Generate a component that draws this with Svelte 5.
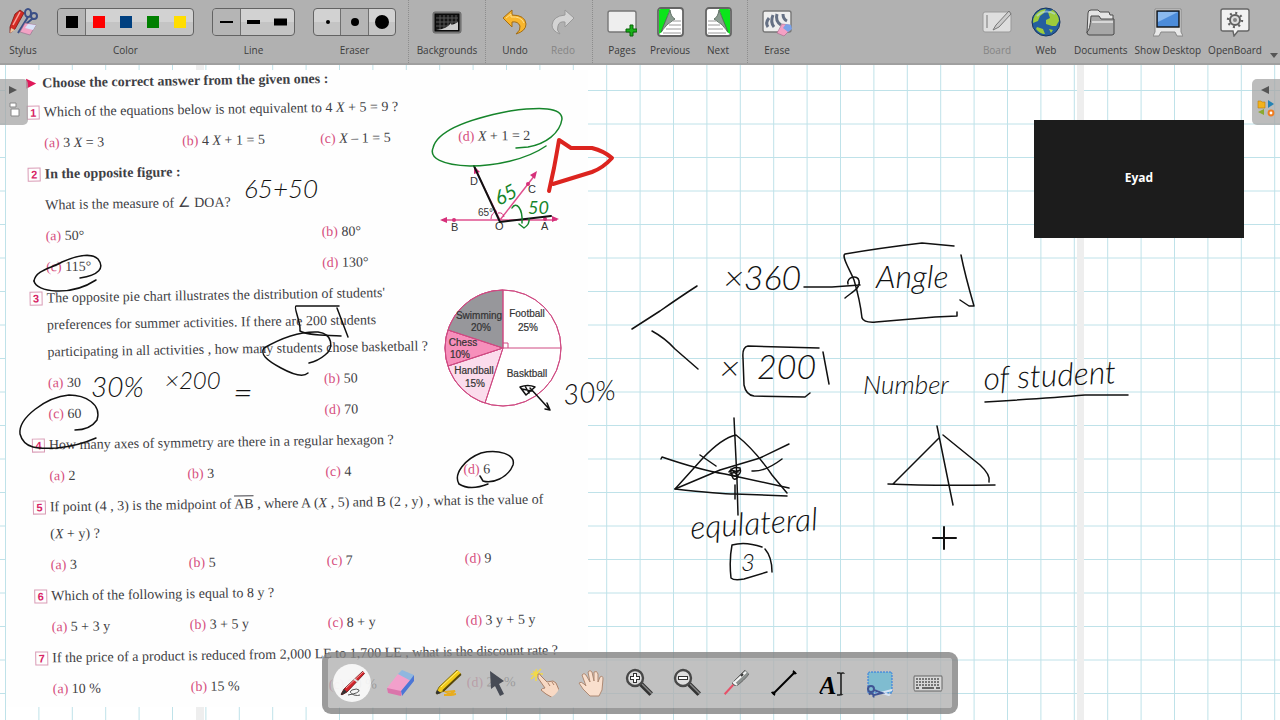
<script lang="ts">
	type Option = { key: string; text: string };
	type Question = { id: number; lines: string[]; options: Option[]; wide?: boolean };

	let color = 'black';
	let line = 0;
	let eraser = 1;
	let activeTool = 'Pen';

	const colors = [
		{ name: 'black', hex: '#000000' },
		{ name: 'red', hex: '#ff0000' },
		{ name: 'blue', hex: '#004080' },
		{ name: 'green', hex: '#008000' },
		{ name: 'yellow', hex: '#ffdd00' }
	];
	const lines = [2, 4, 7];
	const erasers = [2, 4, 7];

	const opts = (...texts: string[]): Option[] =>
		texts.map((text, i) => ({ key: 'abcd'[i], text }));

	const questions: Question[] = [
		{
			id: 1,
			lines: ['Which of the equations below is not equivalent to 4 <i>X</i> + 5 = 9 ?'],
			options: opts('3 <i>X</i> = 3', '4 <i>X</i> + 1 = 5', '<i>X</i> – 1 = 5', '<i>X</i> + 1 = 2')
		},
		{
			id: 2,
			lines: ['<b>In the opposite figure :</b>', 'What is the measure of ∠ DOA?'],
			options: opts('50°', '80°', '115°', '130°'),
			wide: true
		},
		{
			id: 3,
			lines: [
				"The opposite pie chart illustrates the distribution of students'",
				'preferences for summer activities. If there are 200 students',
				'participating in all activities , how many students chose basketball ?'
			],
			options: opts('30', '50', '60', '70'),
			wide: true
		},
		{
			id: 4,
			lines: ['How many axes of symmetry are there in a regular hexagon ?'],
			options: opts('2', '3', '4', '6')
		},
		{
			id: 5,
			lines: [
				'If point (4 , 3) is the midpoint of <u>AB</u> , where A (<i>X</i> , 5) and B (2 , y) , what is the value of',
				'(<i>X</i> + y) ?'
			],
			options: opts('3', '5', '7', '9')
		},
		{
			id: 6,
			lines: ['Which of the following is equal to 8 y ?'],
			options: opts('5 + 3 y', '3 + 5 y', '8 + y', '3 y + 5 y')
		},
		{
			id: 7,
			lines: ['If the price of a product is reduced from 2,000 LE to 1,700 LE , what is the discount rate ?'],
			options: opts('10 %', '15 %', '20 %', '22 %')
		}
	];

	const palette = [
		'Pen', 'Eraser', 'Marker', 'Select', 'Interact', 'Scroll', 'Zoom in',
		'Zoom out', 'Laser', 'Line', 'Text', 'Capture', 'Keyboard'
	];

	// free-hand shapes drawn on the board with the black pen
	const strokes = [
		'M34 281C36 270 52 268 62 262C78 255 92 253 98 259C105 268 99 275 80 278',
		'M34 281C36 292 70 297 96 280',
		'M339 306L296 306C293 307 301 322 300 331C310 336 325 335 341 336M337 308L348 337',
		'M308 373C303 378 292 374 281 368C266 360 260 354 264 348C276 341 296 331 318 332C333 334 334 348 325 355Q318 361 309 363',
		'M75 430Q90 430 97 420C102 404 85 395 69 395C46 397 18 418 20 434C24 449 38 449 57 448Q78 446 96 438',
		'M488 484Q470 491 459 484C453 474 465 459 481 453C498 449 516 454 513 465C508 478 492 484 483 481L480 476',
		'M520 387Q528 384 535 387L526 395ZM522 389L532 391M525 386L529 393M530 388L541 400L550 410M545 409L550 410L547 403',
		'M632 329L660 311Q680 297 697 286M652 331Q665 338 675 349L698 369',
		'M804 287L832 287L860 285M848 284C846 277 858 274 859 281C861 288 852 292 845 298',
		'M954 246L922 243Q880 248 845 254C841 256 850 270 854 280Q860 300 862 318Q864 323 876 322L935 317L957 316V312M961 255Q965 275 974 306L969 306L960 300',
		'M819 348L748 346Q742 347 743 358L744 385Q746 395 754 396L805 397L810 393M823 352L829 384',
		'M985 402Q1050 398 1085 395L1128 395',
		'M675 489L703 458Q722 438 736 435Q755 450 772 475L787 493M675 489Q720 494 735 494L787 496',
		'M734 418L737 480L738 515M661 459L662 457Q700 470 725 474L789 488M675 489L720 470L760 458L789 444',
		'M752 471Q765 472 782 459M700 455L716 466M735 485L735 499',
		'M729 472Q733 466 740 468Q742 474 736 476Q730 476 731 470L738 472M732 476Q734 482 738 477M730 474L740 470M731 469L738 476',
		'M762 547Q745 541 732 545Q729 560 731 578Q734 581 744 579L767 572M765 549Q772 557 772 572',
		'M893 484L939 438M943 435L980 465Q991 475 989 482M888 484Q930 486 995 485M937 426L953 505'
	];

	const cols = Array.from({ length: 40 }, (_, i) => 5.5 + i * 33.4);
	const rows = Array.from({ length: 20 }, (_, i) => 90.5 + i * 33.5);
</script>

<div class="app">
	<header class="toolbar">
		<button class="tool stylus">
			<svg class="icon" viewBox="0 0 30 30">
				<path d="M20 2a3 4 0 1 0 0 8a3 4 0 1 0 0-8M26 6a3 3 0 1 0 0 6a3 3 0 1 0 0-6M20 10L10 26M24 12L12 22" fill="none" stroke="#3b4f86" stroke-width="2" />
				<path d="M7 7l5-4 4 3-9 16-5 4 0-6z" fill="#d52b24" stroke="#7d1612" stroke-width=".8" />
				<path d="M5 18L12 5" stroke="#f9a29b" stroke-width="1.5" />
				<path d="M2 26l1-5 4 2z" fill="#e7c9a6" />
				<path d="M17 16l11 2-6 10-10-3z" fill="#f2a2c4" stroke="#916d8b" stroke-width=".6" />
				<path d="M20 17l8 1-3 5-8-2z" fill="#d9e3fa" />
			</svg>
			<span>Stylus</span>
		</button>

		<div class="group" role="group" aria-label="Color">
			<div class="segments">
				{#each colors as c}
					<button class:active={color === c.name} aria-label={c.name} on:click={() => (color = c.name)}>
						<svg width="12" height="12"><rect width="12" height="12" fill={c.hex} /></svg>
					</button>
				{/each}
			</div>
			<span>Color</span>
		</div>
		<div class="group" role="group" aria-label="Line">
			<div class="segments">
				{#each lines as h, i}
					<button class:active={line === i} aria-label="Line {i + 1}" on:click={() => (line = i)}>
						<svg width="13" height="8"><rect y={(8 - h) / 2} width="13" height={h} /></svg>
					</button>
				{/each}
			</div>
			<span>Line</span>
		</div>
		<div class="group" role="group" aria-label="Eraser">
			<div class="segments">
				{#each erasers as r, i}
					<button class:active={eraser === i} aria-label="Eraser {i + 1}" on:click={() => (eraser = i)}>
						<svg width="14" height="14"><circle cx="7" cy="7" {r} /></svg>
					</button>
				{/each}
			</div>
			<span>Eraser</span>
		</div>

		<div class="separator first"></div>
		<button class="tool backgrounds">
			<svg class="icon" viewBox="0 0 30 30">
				<rect x="1" y="5" width="28" height="21" rx="2" fill="#828282" stroke="#666" />
				<rect x="3" y="7" width="24" height="17" fill="#151515" stroke="#000" />
				<path d="M4 11H26M4 15H26M4 19H26M8 8V23M12 8V23M16 8V23M20 8V23M24 8V23" stroke="#565656" />
				<path d="M4 23Q15 22 19 16Q18 20 26 15V23Z" fill="#ccc" />
			</svg>
			<span>Backgrounds</span>
		</button>
		<div class="separator"></div>
		<button class="tool">
			<svg class="icon" viewBox="0 0 30 30">
				<path d="M3 11L12 3V8Q25 8 26 17Q26 24 16 27Q21 23 20 19Q18 14 12 15V20Z" fill="#f9b62d" stroke="#a36c12" />
				<path d="M6 11L11 7V10Q21 9 24 16" fill="none" stroke="#ffe08a" />
			</svg>
			<span>Undo</span>
		</button>
		<button class="tool" disabled>
			<svg class="icon" viewBox="0 0 30 30">
				<path d="M26 11L17 3V8Q5 9 4 18Q4 24 12 27Q8 23 10 19Q11 14 17 15V20Z" fill="#d4d4d4" stroke="#999" />
			</svg>
			<span>Redo</span>
		</button>
		<div class="separator"></div>
		<button class="tool">
			<svg class="icon" viewBox="0 0 30 30">
				<rect x="1" y="4" width="28" height="21" rx="2" fill="#eee" stroke="#777" stroke-width="1.4" />
				<path d="M23 18h3v4h4v3h-4v4h-3v-4h-4v-3h4z" fill="#18b218" stroke="#086508" />
			</svg>
			<span>Pages</span>
		</button>
		<button class="tool">
			<svg class="icon" viewBox="0 0 30 30">
				<rect x="3" y="1" width="25" height="28" rx="3" fill="#fff" stroke="#646464" stroke-width="1.8" />
				<path d="M4 3Q4 2 6 2H15L7 25L4 27Z" fill="#0be51b" />
				<path d="M15 3L6 25Q11 17 20 12Q16 10 15 3Z" fill="#8b9c91" stroke="#4b5e51" stroke-width=".8" />
				<path d="M18 14H26M14 18H26M11 22H26M8 26H26" stroke="#9a9a9a" />
			</svg>
			<span>Previous</span>
		</button>
		<button class="tool">
			<svg class="icon" viewBox="0 0 30 30">
				<rect x="3" y="1" width="25" height="28" rx="3" fill="#fff" stroke="#646464" stroke-width="1.8" />
				<path d="M27 3Q27 2 25 2H16L24 25L27 27Z" fill="#0be51b" />
				<path d="M16 3L25 25Q20 17 11 12Q15 10 16 3Z" fill="#8b9c91" stroke="#4b5e51" stroke-width=".8" />
				<path d="M5 14H13M5 18H17M5 22H20M5 26H23" stroke="#9a9a9a" />
			</svg>
			<span>Next</span>
		</button>
		<div class="separator"></div>
		<button class="tool">
			<svg class="icon" viewBox="0 0 30 30">
				<rect x="1" y="4" width="28" height="21" rx="2" fill="#eee" stroke="#777" stroke-width="1.4" />
				<path d="M6 20Q3 16 7 11M12 20Q8 15 11 8M19 18Q13 14 15 7M25 14Q21 12 21 7" fill="none" stroke="#657084" stroke-width="3" />
				<path d="M20 17l8 1 1 4-7 7-7-3z" fill="#f4a0c4" stroke="#a2668a" stroke-width=".6" />
				<path d="M24 17l5 1 1 4-4 3-5-4z" fill="#7ba2e8" />
			</svg>
			<span>Erase</span>
		</button>

		<div class="right-tools">
			<button class="tool" disabled>
				<svg class="icon" viewBox="0 0 30 30">
					<rect x="1" y="5" width="28" height="20" rx="2" fill="#dedede" stroke="#999" />
					<path d="M5 8V21" stroke="#aaa" stroke-width="2" />
					<path d="M27 4L14 18L11 23L17 20L29 7Z" fill="#ccc" stroke="#777" />
				</svg>
				<span>Board</span>
			</button>
			<button class="tool">
				<svg class="icon" viewBox="0 0 30 30">
					<circle cx="15" cy="15" r="14" fill="#245f9f" stroke="#17355e" />
					<path d="M4 8Q9 2 15 2L13 6L9 9L7 14L2 16Q2 11 4 8M17 5L22 3Q28 8 28 14L25 19L21 19L15 17L15 13L19 11ZM6 20L12 22L14 27Q9 27 5 22M18 22L22 23L20 26Z" fill="#9dcb3b" />
					<path d="M6 9Q14 1 24 7" stroke="#b9d9f2" fill="none" opacity=".6" stroke-width="2" />
				</svg>
				<span>Web</span>
			</button>
			<button class="tool">
				<svg class="icon" viewBox="0 0 30 30">
					<path d="M2 6Q2 3 5 3H12L14 5H23L24 8H27V24H4L1 26Z" fill="#e4e4e4" stroke="#4c4c4c" />
					<path d="M5 9H13L15 12H28V27Q27 28 26 28H3Q1 28 1 25Q4 24 5 9Z" fill="#a7a7a7" stroke="#494949" />
					<path d="M6 15H27" stroke="#d7d7d7" stroke-width="2" />
				</svg>
				<span>Documents</span>
			</button>
			<button class="tool">
				<svg class="icon" viewBox="0 0 30 30">
					<path d="M2 2H28V25L30 29H24L22 25H8L6 29H0L2 25Z" fill="#e8e8e8" stroke="#888" />
					<rect x="4" y="4" width="22" height="16" fill="#4c8cda" stroke="#111" stroke-width="1.4" />
					<path d="M5 5H25L5 15Z" fill="#8ab9ee" />
				</svg>
				<span>Show Desktop</span>
			</button>
			<button class="tool">
				<svg class="icon" viewBox="0 0 30 30">
					<path d="M3 2H27Q29 2 29 4V22Q29 24 27 24H18L14 29L13 24H3Q1 24 1 22V4Q1 2 3 2Z" fill="#f1f1f1" stroke="#656565" stroke-width="1.4" />
					<circle cx="15" cy="13" r="5" fill="#ddd" stroke="#606060" stroke-width="2" />
					<circle cx="15" cy="13" r="7" fill="none" stroke="#606060" stroke-width="2.4" stroke-dasharray="2 3.5" />
					<circle cx="15" cy="13" r="2" fill="#858585" />
				</svg>
				<span>OpenBoard</span>
			</button>
			<button class="more" aria-label="More"><svg width="10" height="6"><path d="M1 0H9L5 5Z" fill="#555" /></svg></button>
		</div>
	</header>

	<main class="board">
		<svg class="layer" aria-hidden="true">
			<g transform="translate(0 -65)">
				{#each cols as x}
					<line x1={x} x2={x} y1="60" y2="1200" class="grid-line" />
				{/each}
				{#each rows as y}
					<line x1="0" x2="1400" y1={y} y2={y} class="grid-line" />
				{/each}
				<rect x="1077" y="60" width="7" height="1200" fill="#eeeeee" />
				<rect x="196" y="60" width="8" height="1200" fill="#eeeeee" />
			</g>
		</svg>

		<article class="worksheet">
			<div class="questions">
				<h1><span class="pointer"></span>Choose the correct answer from the given ones :</h1>
				{#each questions as q}
					<section>
						<div class="question" class:spread={q.id === 2}>
							<span class="number">{q.id}</span>
							<p>
								{#each q.lines as l}
									<span class="text-line">{@html l}</span>
								{/each}
							</p>
						</div>
						<ul class:wide={q.wide}>
							{#each q.options as o}
								<li><span>({o.key})</span> {@html o.text}</li>
							{/each}
						</ul>
					</section>
				{/each}
			</div>
		</article>

		<svg class="layer">
			<g transform="translate(0 -65)">
				<g class="angle-figure">
					<path d="M442 220H557M500 220L475 169M500 220L535 175" fill="none" stroke="#e0508e" stroke-width="1.5" />
					<path d="M440 220l7-3v6zM559 219l-7-3v6zM537 171l-2 8-5-4zM474 166l6 6-6 2z" fill="#d6307a" />
					<path d="M491 219q0-6 6-8M498 213q5-1 6 4" fill="none" stroke="#d6307a" />
					<circle cx="454" cy="220" r="2" /><circle cx="545" cy="219" r="2" /><circle cx="528" cy="184" r="2" />
					<text x="451" y="231">B</text>
					<text x="495" y="230">O</text>
					<text x="541" y="230">A</text>
					<text x="470" y="185">D</text>
					<text x="528" y="193">C</text>
					<text x="478" y="216" class="small">65°</text>
				</g>

				<g class="pie">
					<circle cx="503" cy="348" r="58" fill="#fff" />
					<path d="M503 348L485 403A58 58 0 0 1 448 366Z" fill="#fbdcec" />
					<path d="M503 348L448 366A58 58 0 0 1 448 330Z" fill="#f78fbb" />
					<path d="M503 348L448 330A58 58 0 0 1 503 290Z" fill="#97979b" />
					<path d="M503 290V348H561M503 348L485 403M503 348L448 366M503 348L448 330M503 343h5v5" />
					<circle cx="503" cy="348" r="58" />
					<text x="479" y="319">Swimming</text><text x="481" y="331">20%</text>
					<text x="527" y="317">Football</text><text x="528" y="331">25%</text>
					<text x="463" y="346">Chess</text><text x="460" y="358">10%</text>
					<text x="474" y="374">Handball</text><text x="475" y="387">15%</text>
					<text x="527" y="377">Basktball</text>
				</g>

				<g class="ink">
					{#each strokes as d}
						<path {d} />
					{/each}
					<path d="M474 166L487 194L500 222L551 216" stroke-width="2" />
					<path d="M933 538H956M944 527V549" stroke-width="2" />
				</g>
				<g class="ink green">
					<path d="M546 146C526 160 494 166 470 166C442 165 429 158 433 148C438 127 484 116 510 111C540 107 562 107 562 119C560 133 546 144 528 147L516 148" />
					<path d="M512 208C516 201 523 208 522 223M519 224L524 228Q530 224 529 219" />
				</g>
				<path class="marker" d="M559 140L571 148L592 148Q604 151 612 158Q603 168 592 172L553 184M559 140Q557 152 554 168L549 191" />

				<g class="writing">
					<text x="244" y="198" font-size="26">65+50</text>
					<text x="91" y="397" font-size="28">30%</text>
					<text x="165" y="389" font-size="24">×200</text>
					<text x="233" y="404" font-size="34">=</text>
					<text x="564" y="405" font-size="28" transform="rotate(-6 564 405)">30%</text>
					<text x="724" y="290" font-size="34">×360</text>
					<text x="876" y="288" font-size="32">Angle</text>
					<text x="720" y="380" font-size="34">×</text>
					<text x="757" y="379" font-size="34">200</text>
					<text x="863" y="394" font-size="26">Number</text>
					<text x="984" y="390" font-size="32" transform="rotate(-3 984 390)">of student</text>
					<text x="691" y="539" font-size="32" transform="rotate(-4 691 539)">equlateral</text>
					<text x="741" y="571" font-size="24">3</text>
					<g class="green-text">
						<text x="499" y="206" font-size="20" transform="rotate(-28 499 206)">65</text>
						<text x="528" y="214" font-size="18">50</text>
					</g>
				</g>
			</g>
		</svg>

		<button class="side-tab left" aria-label="Show pages">
			<svg width="12" height="34" viewBox="0 0 12 34">
				<path d="M1 1L9 5L1 9Z" fill="#555" />
				<path d="M2 18h6v4h-6zM3 24h8v7h-8z" fill="#fff" stroke="#888" />
			</svg>
		</button>
		<button class="side-tab right" aria-label="Show library">
			<svg width="18" height="36" viewBox="0 0 18 36">
				<path d="M12 2L4 6L12 10Z" fill="#555" />
				<path d="M1 17h3l1 1h3v6H1z" fill="#f2b21c" stroke="#b97c0a" stroke-width=".6" />
				<path d="M11 16l6 4-6 4z" fill="#2583b4" />
				<path d="M7 25v6l-6-3z" fill="#8ba82f" />
				<circle cx="14" cy="29" r="2.4" fill="#fff" stroke="#ef7d22" stroke-width="2" />
			</svg>
		</button>

		<aside class="participant">Eyad</aside>

		<nav class="palette" aria-label="Tools">
			{#each palette as name}
				<button class:active={activeTool === name} aria-label={name} on:click={() => (activeTool = name)}>
					<svg viewBox="0 0 32 32">
						{#if name === 'Pen'}
							<path d="M12 28q12-2 11-5q-2-2-7 0q-4 2 2 5q4 1 6 0" fill="none" stroke="#555" />
							<path d="M4 29L8 22L27 4L30 3L29 6L11 25Z" fill="#d3242b" stroke="#611" stroke-width=".8" />
							<path d="M10 21L27 5" stroke="#f79c9c" />
							<path d="M4 29L8 22L11 25Z" fill="#333" />
							<path d="M18 12l4 3" stroke="#ddd" stroke-width="2" />
						{:else if name === 'Eraser'}
							<path d="M3 21L14 7L27 12L17 29L4 25Z" fill="#f2a0cb" />
							<path d="M14 7L18 3L30 8L27 14Z" fill="#90b7df" />
							<path d="M27 12L30 8V14L18 29L17 24Z" fill="#4c76d6" />
							<path d="M3 21L17 24V29L4 26Z" fill="#da75ab" />
						{:else if name === 'Marker'}
							<path d="M12 28H19L14 25L23 24L17 28L24 27" fill="none" stroke="#e8ac1e" stroke-width="2" />
							<path d="M3 28L7 20L25 3L30 4L29 7L12 24Z" fill="#f1ca17" stroke="#6c5b08" stroke-width=".8" />
							<path d="M9 20L26 4" stroke="#fff07a" />
							<path d="M11 24L29 7" stroke="#57480b" stroke-width="2" />
							<path d="M3 28L5 23L9 26Z" fill="#333" />
						{:else if name === 'Select'}
							<path d="M10 4L24 14L19 17L24 27L20 29L15 19L11 22Z" fill="#474b55" />
						{:else if name === 'Interact'}
							<path d="M8 0V14M1 7H15M3 2L13 12M13 2L3 12" stroke="#f3da45" stroke-width="1.5" />
							<path d="M10 7Q12 6 13 9L19 15L25 14L28 16L31 23V27L25 31L18 27L13 23Q14 21 17 21L10 11Z" fill="#f8d9c4" stroke="#aa8069" />
							<path d="M20 16L22 19M24 15L26 18" stroke="#aa8069" />
						{:else if name === 'Scroll'}
							<path d="M3 16Q5 14 8 17L10 19L6 8Q8 5 10 8L14 15L12 5Q14 2 16 5L18 14L18 5Q21 3 22 7L22 15L24 10Q27 8 27 12L26 23L23 29H14L7 22Z" fill="#f9dfcd" stroke="#ae8a74" />
						{:else if name === 'Zoom in' || name === 'Zoom out'}
							<path d="M17 17L29 29" stroke="#333" stroke-width="5" />
							<path d="M18 17L28 27" stroke="#888" stroke-width="1.4" />
							<circle cx="11" cy="11" r="8" fill="#dedede" stroke="#484848" stroke-width="2.4" />
							<path d={name === 'Zoom in' ? 'M6 11H16M11 6V16' : 'M6 11H16'} stroke="#333" stroke-width="4" />
							<path d={name === 'Zoom in' ? 'M7 11H15M11 7V15' : 'M7 11H15'} stroke="#fff" stroke-width="2" />
						{:else if name === 'Laser'}
							<path d="M3 29L14 17" stroke="#e65269" stroke-width="2" />
							<path d="M12 16L25 3Q28 1 30 4Q30 8 18 18Q14 20 12 16Z" fill="#8b918f" stroke="#666" />
							<path d="M14 16L26 5M13 15L17 18" stroke="#f5f5f5" stroke-width="2" />
							<path d="M21 9L23 7" stroke="#333" stroke-width="2" />
						{:else if name === 'Line'}
							<path d="M5 27L27 5" stroke="#000" stroke-width="2" />
							<circle cx="5" cy="27" r="2.4" /><circle cx="27" cy="5" r="2.4" />
						{:else if name === 'Text'}
							<text x="3" y="27" class="letter">A</text>
							<path d="M21 6H24L25 7L26 6H29M25 7V27M21 28H24L25 27L26 28H29" fill="none" stroke="#222" stroke-width="1.6" />
						{:else if name === 'Capture'}
							<rect x="4" y="5" width="24" height="21" fill="#7fbcd0" stroke="#2876e1" stroke-dasharray="2 1" />
							<path d="M9 23L28 29M9 28L28 23" stroke="#d8e4f5" stroke-width="2" />
							<circle cx="7" cy="22" r="3" fill="none" stroke="#3f5494" stroke-width="2" />
							<circle cx="7" cy="29" r="2.6" fill="none" stroke="#3f5494" stroke-width="2" />
							<path d="M10 23L18 26L10 28" fill="none" stroke="#3f5494" stroke-width="2" />
						{:else}
							<rect x="2" y="9" width="28" height="15" fill="#d8d8d8" stroke="#656565" />
							<path d="M4 12H28M4 15H28M4 18H28" stroke="#777" stroke-width="2" stroke-dasharray="2 1" />
							<path d="M4 21H7M10 21H22M24 21H28" stroke="#666" stroke-width="2" />
						{/if}
					</svg>
				</button>
			{/each}
		</nav>
	</main>
</div>

<style>
	:global(body) {
		margin: 0;
	}

	.app {
		display: flex;
		flex-direction: column;
		height: 100vh;
		overflow: hidden;
		font-family: 'Open Sans', 'Noto Sans', sans-serif;
	}

	button {
		padding: 0;
		border: none;
		background: none;
		font: inherit;
		color: inherit;
		cursor: pointer;
	}

	/* Toolbar */
	.toolbar {
		display: flex;
		box-sizing: border-box;
		height: 65px;
		padding: 7px 1px 0 7px;
		background: #b1b1b1;
		border-bottom: 2px solid #a0a0a0;
		color: #3c3c3c;
		font-size: 10px;
		line-height: 16px;
		flex-shrink: 0;
	}

	.tool,
	.group {
		display: flex;
		flex-direction: column;
		align-items: center;
		gap: 5px;
		white-space: nowrap;
	}

	.tool {
		width: 48px;
	}

	.tool:disabled {
		color: #858585;
	}

	.stylus {
		width: 32px;
	}

	.backgrounds {
		width: 66px;
	}

	.icon {
		width: 30px;
		height: 30px;
		flex-shrink: 0;
	}

	.group {
		margin-left: 18px;
	}

	.segments {
		display: flex;
		box-sizing: border-box;
		height: 28px;
		margin: 1px 0;
		border: 1px solid #636363;
		border-radius: 4px;
		background: linear-gradient(#d2d2d2 50%, #c4c4c4 50%);
		overflow: hidden;
	}

	.segments button {
		display: flex;
		align-items: center;
		justify-content: center;
		width: 27px;
	}

	.segments button.active {
		background: #b5b5b5;
		box-shadow: 0 0 0 1px #707070;
	}

	.separator {
		margin: -7px 5px 0;
		border-left: 1px dotted #8d8d8d;
	}

	.separator.first {
		margin-left: 12px;
	}

	.right-tools {
		display: flex;
		gap: 7px;
		margin-left: auto;
	}

	.right-tools .tool {
		width: auto;
		min-width: 42px;
	}

	.more {
		align-self: flex-end;
	}

	/* Board */
	.board {
		position: relative;
		flex: 1;
		background: #fff;
		overflow: hidden;
	}

	.layer {
		position: absolute;
		inset: 0;
		width: 100%;
		height: 100%;
		pointer-events: none;
	}

	.grid-line {
		stroke: #bfe2e9;
		stroke-width: 1;
	}

	.worksheet {
		position: absolute;
		top: 5px;
		left: 6px;
		width: 582px;
		height: 637px;
		background: #fefefe;
		color: #3f3f45;
		font-family: 'Liberation Serif', serif;
		font-size: 14px;
		line-height: 27px;
	}

	.questions {
		padding-left: 20px;
		transform: rotate(-0.9deg);
		transform-origin: top left;
	}

	h1 {
		display: flex;
		align-items: center;
		gap: 6px;
		margin: 0;
		font-size: 14px;
		line-height: 27px;
		white-space: nowrap;
	}

	.pointer {
		border: 5px solid transparent;
		border-left: 10px solid #e0195a;
		border-right: none;
	}

	.question {
		display: flex;
		align-items: flex-start;
		gap: 4px;
		padding: 2px 0;
		white-space: nowrap;
	}

	.question p {
		margin: 0;
	}

	.text-line {
		display: block;
	}

	.spread .text-line + .text-line {
		margin-top: 4px;
	}

	.number {
		box-sizing: border-box;
		width: 13px;
		margin-top: 7px;
		border: 1px solid #d99bb5;
		color: #d82466;
		font: bold 11px/12px 'Liberation Sans', sans-serif;
		text-align: center;
	}

	.question :global(u) {
		text-decoration: overline;
	}

	ul {
		display: grid;
		grid-template-columns: repeat(4, 138px);
		margin: 0;
		padding: 0 0 0 17px;
		list-style: none;
		line-height: 31px;
	}

	ul.wide {
		grid-template-columns: repeat(2, 276px);
	}

	li span {
		color: #d6507f;
	}

	.angle-figure text,
	.pie text {
		fill: #333;
		font-family: 'Liberation Sans', sans-serif;
		font-size: 11px;
	}

	.angle-figure circle {
		fill: #d6307a;
	}

	.angle-figure .small {
		font-size: 10px;
	}

	.pie text {
		font-size: 10px;
		text-anchor: middle;
		stroke: #333;
		stroke-width: 0.2;
	}

	.pie circle,
	.pie path {
		stroke: #cf4a82;
		stroke-width: 1;
	}

	.pie circle:last-of-type,
	.pie path:last-of-type {
		fill: none;
	}

	.ink {
		fill: none;
		stroke: #111;
		stroke-width: 1.5;
		stroke-linecap: round;
		stroke-linejoin: round;
	}

	.green {
		stroke: #16852b;
	}

	.marker {
		fill: none;
		stroke: #dc241f;
		stroke-width: 4;
		stroke-linecap: round;
		stroke-linejoin: round;
	}

	.writing {
		fill: #111;
		font-family: Lato, sans-serif;
		font-style: italic;
		font-weight: 300;
	}

	.green-text {
		fill: #16852b;
		font-weight: 400;
	}

	.side-tab {
		position: absolute;
		top: 14px;
		display: flex;
		align-items: center;
		justify-content: center;
		width: 28px;
		height: 46px;
		background: rgba(165, 165, 165, 0.75);
	}

	.side-tab.left {
		left: 0;
		border-radius: 0 5px 5px 0;
	}

	.side-tab.right {
		right: 0;
		border-radius: 5px 0 0 5px;
	}

	.participant {
		position: absolute;
		top: 55px;
		right: 36px;
		display: flex;
		align-items: center;
		justify-content: center;
		box-sizing: border-box;
		width: 210px;
		height: 118px;
		padding-bottom: 4px;
		background: #1c1c1c;
		color: #fff;
		font-size: 12px;
		font-weight: 700;
	}

	/* Floating tool palette */
	.palette {
		position: absolute;
		bottom: 6px;
		left: 50%;
		display: flex;
		border: 6px solid rgba(130, 130, 130, 0.8);
		border-radius: 9px;
		background: rgba(178, 178, 178, 0.8);
		background-clip: padding-box;
		transform: translateX(-50%);
	}

	.palette button {
		display: flex;
		align-items: center;
		justify-content: center;
		width: 48px;
		height: 50px;
	}

	.palette svg {
		width: 32px;
		height: 32px;
		padding: 3px;
		border-radius: 50%;
	}

	.palette .active svg {
		background: rgba(255, 255, 255, 0.85);
	}

	.letter {
		font: italic bold 26px 'Liberation Serif', serif;
	}
</style>
